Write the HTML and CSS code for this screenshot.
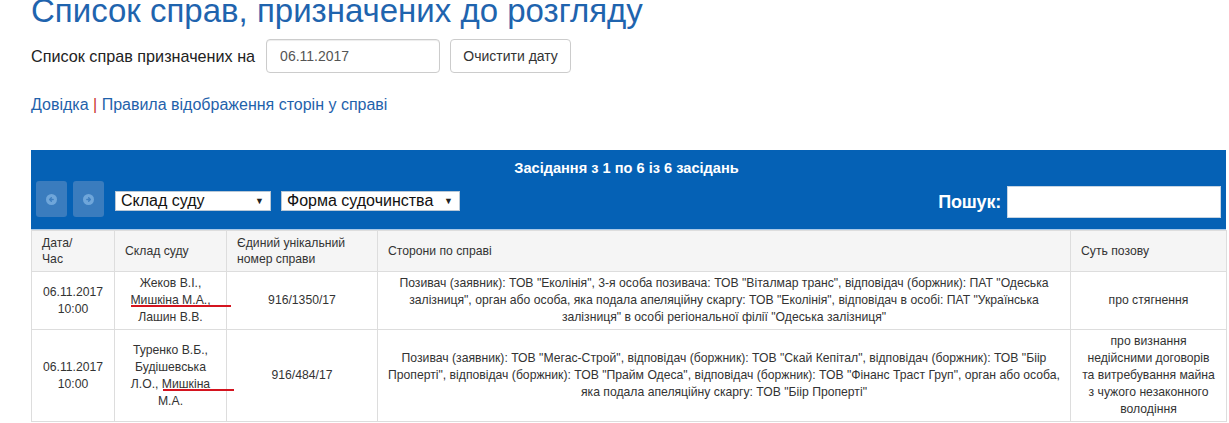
FILE: index.html
```html
<!DOCTYPE html>
<html lang="uk">
<head>
<meta charset="utf-8">
<title>Список справ, призначених до розгляду</title>
<link rel="stylesheet" href="styles.css">
</head>
<body>
<div class="page">
  <h1 class="title">Список справ, призначених до розгляду</h1>

  <form class="date-form">
    <label class="date-label" for="date">Список справ призначених на</label>
    <input class="date-input" id="date" type="text" value="06.11.2017">
    <button class="btn" type="button">Очистити дату</button>
  </form>

  <p class="links"><a href="#">Довідка</a> <span class="sep">|</span> <a href="#">Правила відображення сторін у справі</a></p>

  <div class="grid">
    <div class="toolbar">
      <div class="toolbar-title">Засідання з 1 по 6 із 6 засідань</div>
      <div class="controls">
        <button class="nav-btn" type="button" aria-label="Попередня">
          <svg width="11" height="11" viewBox="0 0 12 12"><circle cx="6" cy="6" r="6" fill="#6fa6da"/><path d="M7.8 6H4.2M5.8 4.2L4 6l1.8 1.8" stroke="#3d7ec0" stroke-width="1.5" fill="none" stroke-linecap="round" stroke-linejoin="round"/></svg>
        </button>
        <button class="nav-btn" type="button" aria-label="Наступна">
          <svg width="11" height="11" viewBox="0 0 12 12"><circle cx="6" cy="6" r="6" fill="#6fa6da"/><path d="M4.2 6h3.6M6.2 4.2L8 6 6.2 7.8" stroke="#3d7ec0" stroke-width="1.5" fill="none" stroke-linecap="round" stroke-linejoin="round"/></svg>
        </button>
        <div class="sel sel-court"><span>Склад суду</span><span class="arrow">▼</span></div>
        <div class="sel sel-form"><span>Форма судочинства</span><span class="arrow">▼</span></div>
        <div class="search">
          <span class="search-label">Пошук:</span>
          <input class="search-input" type="text">
        </div>
      </div>
    </div>

    <table class="cases">
      <colgroup>
        <col class="c-date"><col class="c-court"><col class="c-num"><col class="c-parties"><col class="c-subj">
      </colgroup>
      <thead>
        <tr>
          <th>Дата/<br>Час</th>
          <th>Склад суду</th>
          <th>Єдиний унікальний номер справи</th>
          <th>Сторони по справі</th>
          <th>Суть позову</th>
        </tr>
      </thead>
      <tbody>
        <tr class="r1">
          <td>06.11.2017<br>10:00</td>
          <td>Жеков В.І., <span class="mark m1">Мишкіна&nbsp;М.А.,</span> Лашин&nbsp;В.В.</td>
          <td>916/1350/17</td>
          <td>Позивач (заявник): ТОВ "Еколінія", 3-я особа позивача: ТОВ "Віталмар транс", відповідач (боржник): ПАТ "Одеська залізниця", орган або особа, яка подала апеляційну скаргу: ТОВ "Еколінія", відповідач в особі: ПАТ "Українська залізниця" в особі регіональної філії "Одеська залізниця"</td>
          <td>про стягнення</td>
        </tr>
        <tr class="r2">
          <td>06.11.2017<br>10:00</td>
          <td>Туренко В.Б., Будішевська Л.О., <span class="mark m2">Мишкіна</span> М.А.</td>
          <td>916/484/17</td>
          <td>Позивач (заявник): ТОВ "Мегас-Строй", відповідач (боржник): ТОВ "Скай Кепітал", відповідач (боржник): ТОВ "Біір Проперті", відповідач (боржник): ТОВ "Прайм Одеса", відповідач (боржник): ТОВ "Фінанс Траст Груп", орган або особа, яка подала апеляційну скаргу: ТОВ "Біір Проперті"</td>
          <td>про визнання недійсними договорів та&nbsp;витребування майна з&nbsp;чужого незаконного володіння</td>
        </tr>
      </tbody>
    </table>
  </div>
</div>
</body>
</html>
```

FILE: styles.css
```css
* { box-sizing: border-box; }

body {
  margin: 0;
  background: #fff;
  font-family: "Liberation Sans", Arial, sans-serif;
  color: #333;
  overflow: hidden;
}

.page {
  padding-left: 31px;
  width: 1229px;
}

.title {
  margin: -6px 0 0;
  font-size: 33px;
  line-height: 33px;
  font-weight: normal;
  color: #1f64ae;
}

.date-form {
  display: flex;
  align-items: center;
  margin-top: 12px;
  height: 34px;
}

.date-label {
  font-size: 16.2px;
  color: #222;
  margin-right: 11px;
}

.date-input {
  width: 174px;
  height: 34px;
  border: 1px solid #ccc;
  border-radius: 4px;
  padding: 6px 13px;
  font: 14px "Liberation Sans", Arial, sans-serif;
  color: #555;
  box-shadow: inset 0 1px 1px rgba(0,0,0,.075);
}

.btn {
  margin-left: 10px;
  width: 121px;
  height: 34px;
  border: 1px solid #ccc;
  border-radius: 4px;
  background: #fff;
  font: 14px "Liberation Sans", Arial, sans-serif;
  color: #333;
  padding: 6px 10px;
}

.links {
  margin: 22px 0 0;
  font-size: 16px;
  line-height: 20px;
}

.links a {
  color: #1f62ab;
  text-decoration: none;
}

.sep { color: #c9302c; }

.grid {
  margin-top: 35px;
  width: 1195px;
}

.toolbar {
  background: #0561b5;
  border-bottom: 1px solid #a9c9e8;
  padding: 9px 5px 12px;
  height: 80px;
}

.toolbar-title {
  text-align: center;
  color: #fff;
  font-weight: bold;
  font-size: 14.6px;
  line-height: 18px;
  margin-bottom: 4px;
  padding-right: 4px;
}

.controls {
  display: flex;
  align-items: center;
  height: 36px;
}

.nav-btn {
  width: 31px;
  height: 36px;
  border: 0;
  border-radius: 3px;
  background: #3a7cbe;
  margin-right: 6px;
  display: flex;
  align-items: center;
  justify-content: center;
  padding: 0;
}

.sel {
  display: flex;
  align-items: center;
  justify-content: space-between;
  height: 20px;
  margin-top: 4px;
  background: #fff;
  border: 1px solid #b9c8d6;
  color: #111;
  font-size: 16px;
  padding: 0 6px 0 5px;
}

.sel-court { width: 156px; margin-left: 5px; }
.sel-form { width: 179px; margin-left: 10px; }

.arrow {
  font-size: 9px;
  color: #222;
}

.search {
  margin-left: auto;
  display: flex;
  align-items: center;
  margin-top: 6px;
}

.search-label {
  color: #fff;
  font-weight: bold;
  font-size: 18px;
  letter-spacing: -0.2px;
  margin-right: 6px;
}

.search-input {
  width: 214px;
  height: 32px;
  border: 1px solid #c6d4e2;
  background: #fff;
}

.cases {
  width: 1195px;
  border-collapse: collapse;
  table-layout: fixed;
  font-size: 12.2px;
}

.c-date { width: 83px; }
.c-court { width: 112px; }
.c-num { width: 151px; }
.c-parties { width: 693px; }
.c-subj { width: 156px; }

.cases th,
.cases td {
  border: 1px solid #ddd;
  padding: 3px 8px;
  line-height: 17px;
  vertical-align: middle;
}

.cases th {
  background: #f5f5f5;
  font-weight: normal;
  text-align: left;
  padding: 3px 10px;
  line-height: 16px;
  height: 41px;
  color: #333;
}

.cases td {
  text-align: center;
  color: #333;
}

.mark {
  position: relative;
}

.mark::after {
  content: "";
  position: absolute;
  left: 1px;
  bottom: 0;
  height: 2px;
  background: #d4141f;
}

.m1::after { width: 100px; }
.m2::after { width: 71px; }
```
